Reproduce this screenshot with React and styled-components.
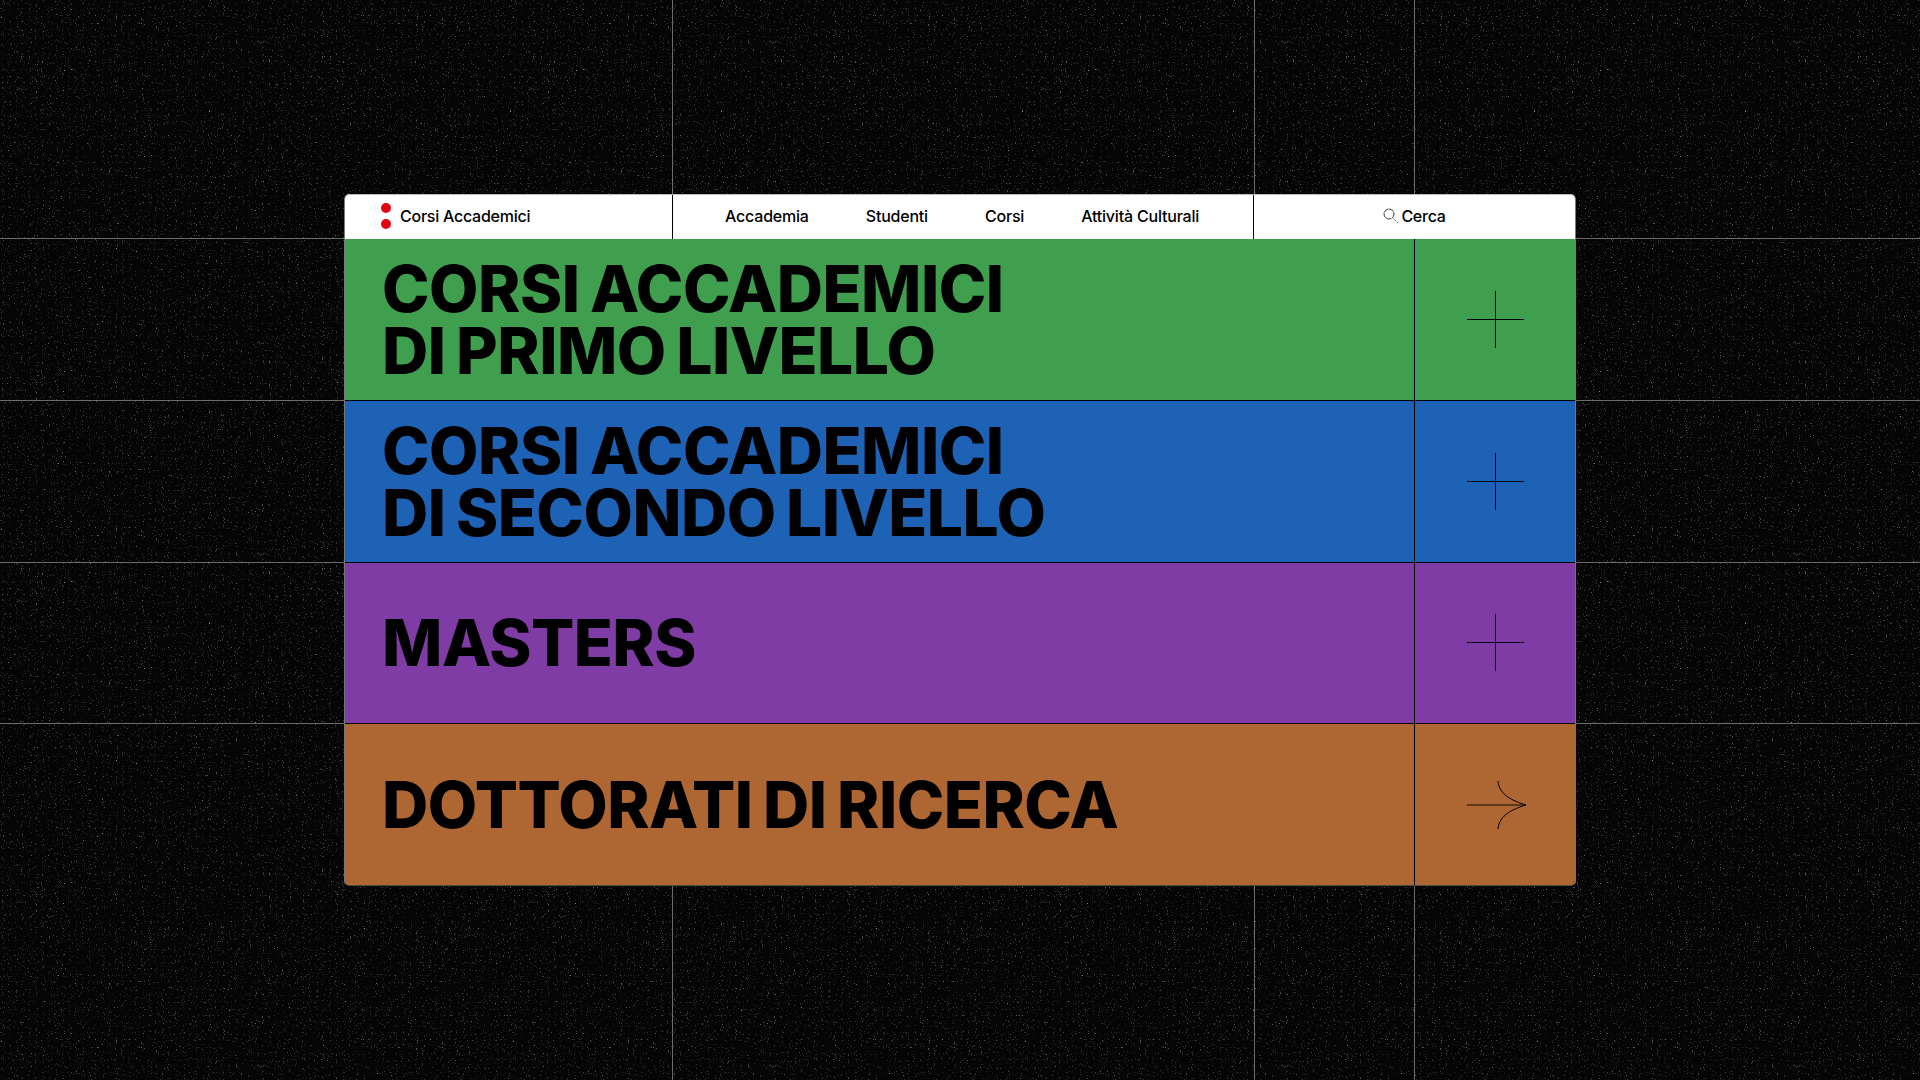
import React from "react";
import styled, { createGlobalStyle } from "styled-components";

const noise =
  "data:image/svg+xml,%3Csvg xmlns='http://www.w3.org/2000/svg' width='512' height='512'%3E%3Cfilter id='n'%3E%3CfeTurbulence type='fractalNoise' baseFrequency='0.85' numOctaves='2' seed='4' stitchTiles='stitch'/%3E%3CfeColorMatrix values='0 0 0 0 0.25 0 0 0 0 0.25 0 0 0 0 0.25 4 0 0 0 -2.6'/%3E%3C/filter%3E%3Crect width='512' height='512' filter='url(%23n)'/%3E%3C/svg%3E";

const GlobalStyle = createGlobalStyle`
  html, body {
    margin: 0;
    padding: 0;
    background: #050505;
  }
  * {
    box-sizing: border-box;
  }
`;

const lineColor = "#6c6c6c";

// the thin guide lines are part of the page backdrop
const Page = styled.div`
  width: 1920px;
  height: 1080px;
  overflow: hidden;
  padding: 194px 0 0 344px;
  font-family: Inter, "Liberation Sans", sans-serif;
  color: #000;
  background-color: #050505;
  background-repeat: no-repeat, no-repeat, no-repeat, no-repeat, no-repeat, no-repeat, no-repeat, repeat;
  background-size: 1px 100%, 1px 100%, 1px 100%, 100% 1px, 100% 1px, 100% 1px, 100% 1px, 512px 512px;
  background-position: 672px 0, 1254px 0, 1414px 0, 0 238px, 0 400px, 0 562px, 0 723px, 0 0;
  background-image:
    linear-gradient(${lineColor}, ${lineColor}),
    linear-gradient(${lineColor}, ${lineColor}),
    linear-gradient(${lineColor}, ${lineColor}),
    linear-gradient(${lineColor}, ${lineColor}),
    linear-gradient(${lineColor}, ${lineColor}),
    linear-gradient(${lineColor}, ${lineColor}),
    linear-gradient(${lineColor}, ${lineColor}),
    url("${noise}");
`;

const Panel = styled.div`
  width: 1232px;
  height: 692px;
  border: 1px solid #777;
  border-top-color: #bbb;
  border-bottom-color: #4a4a4a;
  border-radius: 5px;
  overflow: hidden;
  display: flex;
  flex-direction: column;
`;

const Header = styled.header`
  height: 44px;
  flex: none;
  background: #fff;
  display: grid;
  grid-template-columns: 327px 582px 1fr;
  font-size: 16px;
  font-weight: 500;
  letter-spacing: -0.25px;
  line-height: 42px;
`;

const Brand = styled.div`
  display: flex;
  align-items: center;
  gap: 9px;
  padding: 0 0 2px 36px;
`;

const Dots = styled.span`
  display: flex;
  flex-direction: column;
  gap: 6px;
`;

const Dot = styled.span`
  width: 10px;
  height: 10px;
  border-radius: 50%;
  background: #e3000f;
`;

const Nav = styled.nav`
  display: flex;
  gap: 57px;
  padding-left: 52px;
  letter-spacing: -0.2px;
  border-left: 1px solid #000;
  border-right: 1px solid #000;
`;

const Search = styled.div`
  display: flex;
  align-items: center;
  justify-content: center;
  gap: 2px;
  padding-bottom: 2px;
`;

const Row = styled.section`
  flex: 1;
  display: grid;
  grid-template-columns: 1069px 1fr;
  background: ${(p) => p.$color};
  & + & {
    border-top: 1px solid #000;
  }
`;

const Title = styled.h2`
  margin: 0;
  display: flex;
  align-items: center;
  padding: 1px 0 0 37px;
  font-size: 64px;
  font-weight: 850;
  line-height: 62px;
  letter-spacing: -0.5px;
  word-spacing: -3px;
`;

const IconCell = styled.div`
  display: flex;
  align-items: center;
  justify-content: center;
  border-left: 1px solid #000;
`;

const ArrowSvg = styled.svg`
  margin-left: 3px;
`;

const PlusIcon = () => (
  <svg width="57" height="57" viewBox="0 0 57 57" fill="none" stroke="#000" strokeWidth="1">
    <path d="M28.5 0V57M0 28.5H57" />
  </svg>
);

const ArrowIcon = () => (
  <ArrowSvg width="60" height="50" viewBox="0 0 60 50" fill="none" stroke="#000">
    <path d="M0 25H59" strokeWidth="1.6" strokeOpacity="0.6" />
    <path d="M31 1C32 15 46 21 59 25C46 29 32 35 31 49" strokeWidth="1" />
  </ArrowSvg>
);

const SearchIcon = () => (
  <svg width="16" height="16" viewBox="0 0 16 16" fill="none" stroke="#222" strokeWidth="0.9">
    <circle cx="6" cy="6" r="5" strokeDasharray="5 0.6" />
    <path d="M10.5 10.5L15 15" strokeDasharray="1.2 1.4" />
  </svg>
);

const courses = [
  { color: "#409e4f", lines: ["CORSI ACCADEMICI", "DI PRIMO LIVELLO"], icon: <PlusIcon /> },
  { color: "#1e62b6", lines: ["CORSI ACCADEMICI", "DI SECONDO LIVELLO"], icon: <PlusIcon /> },
  { color: "#803ca5", lines: ["MASTERS"], icon: <PlusIcon /> },
  { color: "#ae6632", lines: ["DOTTORATI DI RICERCA"], icon: <ArrowIcon /> },
];

const links = ["Accademia", "Studenti", "Corsi", "Attività Culturali"];

export default function App() {
  return (
    <Page>
      <GlobalStyle />
      <Panel>
        <Header>
          <Brand>
            <Dots>
              <Dot />
              <Dot />
            </Dots>
            Corsi Accademici
          </Brand>
          <Nav>
            {links.map((link) => (
              <span key={link}>{link}</span>
            ))}
          </Nav>
          <Search>
            <SearchIcon />
            Cerca
          </Search>
        </Header>
        {courses.map((course) => (
          <Row key={course.color} $color={course.color}>
            <Title>
              <span>
                {course.lines.map((line) => (
                  <div key={line}>{line}</div>
                ))}
              </span>
            </Title>
            <IconCell>{course.icon}</IconCell>
          </Row>
        ))}
      </Panel>
    </Page>
  );
}
